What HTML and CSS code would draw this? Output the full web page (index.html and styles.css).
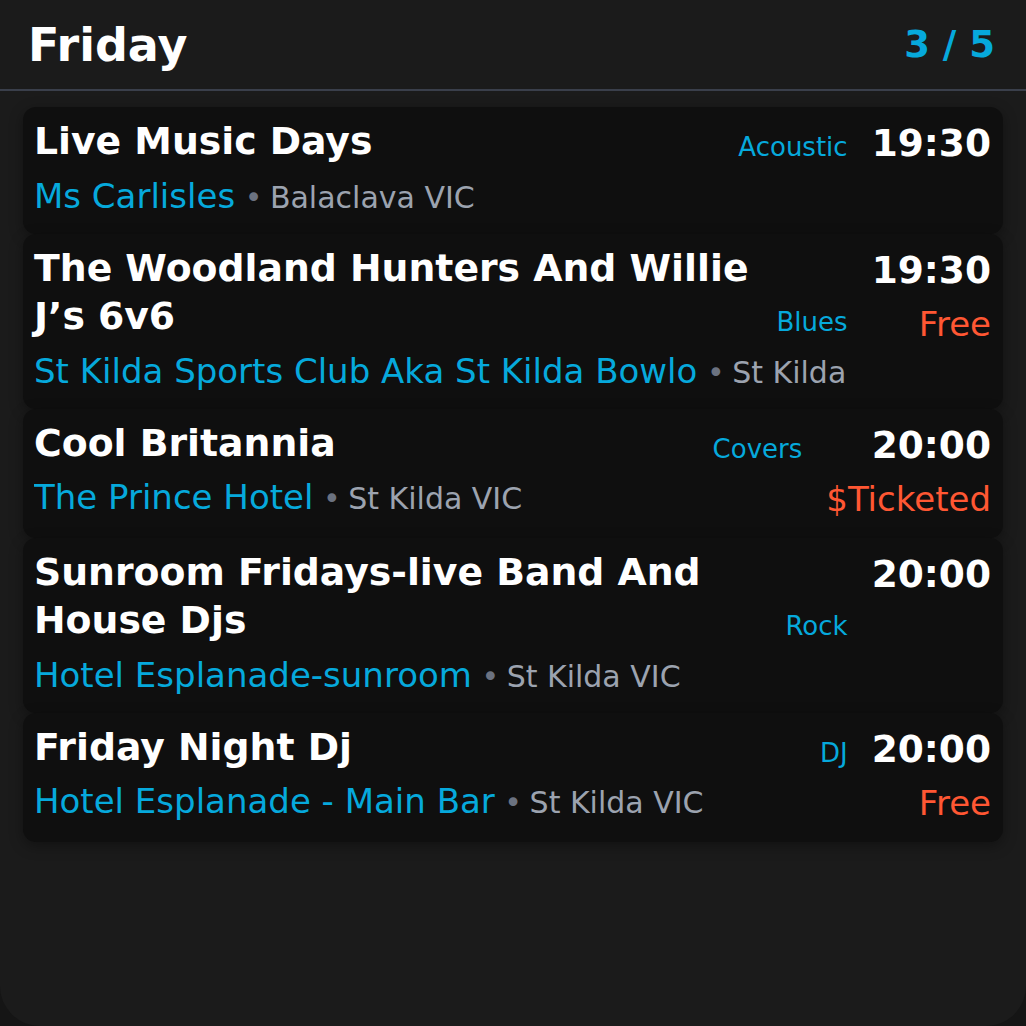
FILE: index.html
```html
<!DOCTYPE html>
<html lang="en">
<head>
<meta charset="utf-8">
<title>Friday</title>
<link rel="stylesheet" href="styles.css">
</head>
<body>
<div class="screen">
  <header class="head">
    <h1 class="day">Friday</h1>
    <span class="count">3 / 5</span>
  </header>
  <div class="list">
    <div class="card">
      <div class="main">
        <div class="top">
          <div class="title">Live Music Days</div>
          <div class="genre">Acoustic</div>
        </div>
        <div class="venue"><span class="vname">Ms Carlisles</span><span class="meta"> <span class="dot">•</span> Balaclava VIC</span></div>
      </div>
      <div class="side">
        <div class="time">19:30</div>
      </div>
    </div>
    <div class="card">
      <div class="main">
        <div class="top">
          <div class="title">The Woodland Hunters And Willie J’s 6v6</div>
          <div class="genre">Blues</div>
        </div>
        <div class="venue"><span class="vname">St Kilda Sports Club Aka St Kilda Bowlo</span><span class="meta"> <span class="dot">•</span> St Kilda VIC</span></div>
      </div>
      <div class="side">
        <div class="time">19:30</div>
        <div class="price">Free</div>
      </div>
    </div>
    <div class="card">
      <div class="main">
        <div class="top">
          <div class="title">Cool Britannia</div>
          <div class="genre">Covers</div>
        </div>
        <div class="venue"><span class="vname">The Prince Hotel</span><span class="meta"> <span class="dot">•</span> St Kilda VIC</span></div>
      </div>
      <div class="side">
        <div class="time">20:00</div>
        <div class="price">$Ticketed</div>
      </div>
    </div>
    <div class="card">
      <div class="main">
        <div class="top">
          <div class="title">Sunroom Fridays-live Band And House Djs</div>
          <div class="genre">Rock</div>
        </div>
        <div class="venue"><span class="vname">Hotel Esplanade-sunroom</span><span class="meta"> <span class="dot">•</span> St Kilda VIC</span></div>
      </div>
      <div class="side">
        <div class="time">20:00</div>
      </div>
    </div>
    <div class="card">
      <div class="main">
        <div class="top">
          <div class="title">Friday Night Dj</div>
          <div class="genre">DJ</div>
        </div>
        <div class="venue"><span class="vname">Hotel Esplanade - Main Bar</span><span class="meta"> <span class="dot">•</span> St Kilda VIC</span></div>
      </div>
      <div class="side">
        <div class="time">20:00</div>
        <div class="price">Free</div>
      </div>
    </div>
  </div>
</div>
</body>
</html>
```

FILE: styles.css
```css
* { box-sizing: border-box; }
html, body {
  margin: 0;
  padding: 0;
  background: #151515;
  font-family: "DejaVu Sans", sans-serif;
}
.screen {
  width: 1026px;
  height: 1026px;
  background: #1b1b1b;
  border-radius: 0 0 40px 40px;
  overflow: hidden;
}
.head {
  height: 91px;
  display: flex;
  align-items: center;
  justify-content: space-between;
  padding: 0 31px 0 28px;
  border-bottom: 2px solid #3a3f4b;
}
.day {
  margin: 0;
  font-size: 46px;
  font-weight: bold;
  color: #ffffff;
  line-height: 1;
}
.count {
  font-size: 37px;
  font-weight: bold;
  color: #06a9dc;
  line-height: 1;
}
.list {
  padding: 16px 23px 0;
  display: flex;
  flex-direction: column;
}
.card {
  display: flex;
  gap: 24px;
  background: #0f0f0f;
  border-radius: 13px;
  padding: 12px 12px 17px 11px;
  box-shadow: 0 4px 14px rgba(0, 0, 0, 0.35);
}
.main {
  flex: 1;
  min-width: 0;
  display: flex;
  flex-direction: column;
}
.top {
  display: flex;
  align-items: last baseline;
  gap: 12px;
}
.title {
  flex: 1;
  min-width: 0;
  font-size: 37.75px;
  font-weight: bold;
  line-height: 48.5px;
  color: #ffffff;
  position: relative;
  top: -2px;
}
.genre {
  font-size: 26px;
  color: #06a9dc;
  white-space: nowrap;
}
.venue {
  margin-top: 8px;
  font-size: 34px;
  line-height: 41px;
  white-space: nowrap;
  overflow: hidden;
  text-overflow: clip;
}
.vname { color: #06a9dc; }
.meta {
  color: #9ca3af;
  font-size: 30px;
  line-height: 1;
}
.dot {
  color: #6b7280;
  margin-right: -2px;
}
.side {
  display: flex;
  flex-direction: column;
  align-items: flex-end;
  white-space: nowrap;
}
.time {
  font-size: 37.5px;
  font-weight: bold;
  line-height: 48px;
  color: #ffffff;
}
.price {
  margin-top: 8px;
  font-size: 34px;
  line-height: 44px;
  color: #ff5733;
}
```
